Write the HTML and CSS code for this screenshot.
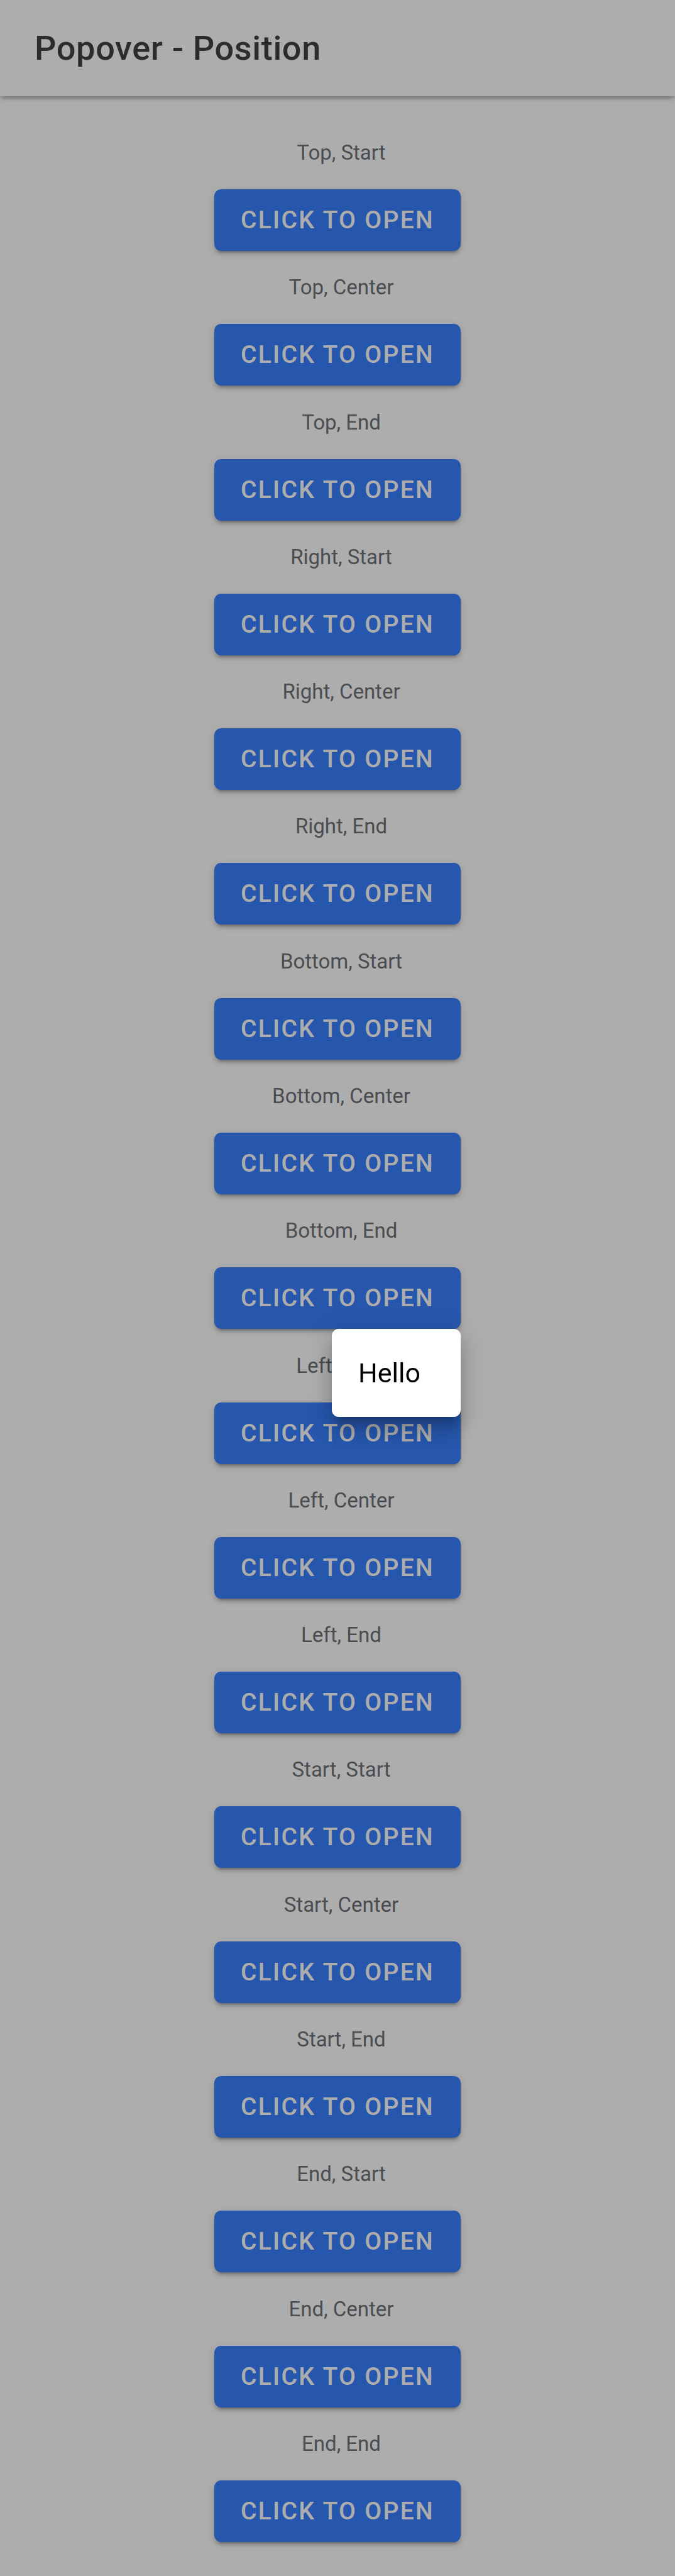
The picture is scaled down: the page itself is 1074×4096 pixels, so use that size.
FILE: index.html
```
<!DOCTYPE html>
<html lang="en">
<head>
<meta charset="utf-8">
<meta name="viewport" content="width=device-width, initial-scale=1">
<title>Popover - Position</title>
<link rel="stylesheet" href="styles.css">
</head>
<body>
<header class="toolbar"><h1 class="toolbar-title">Popover - Position</h1></header>
<main class="content">
  <section class="item"><h2 class="label">Top, Start</h2><button class="trigger" type="button">Click to open</button></section>
  <section class="item"><h2 class="label">Top, Center</h2><button class="trigger" type="button">Click to open</button></section>
  <section class="item"><h2 class="label">Top, End</h2><button class="trigger" type="button">Click to open</button></section>
  <section class="item"><h2 class="label">Right, Start</h2><button class="trigger" type="button">Click to open</button></section>
  <section class="item"><h2 class="label">Right, Center</h2><button class="trigger" type="button">Click to open</button></section>
  <section class="item"><h2 class="label">Right, End</h2><button class="trigger" type="button">Click to open</button></section>
  <section class="item"><h2 class="label">Bottom, Start</h2><button class="trigger" type="button">Click to open</button></section>
  <section class="item"><h2 class="label">Bottom, Center</h2><button class="trigger" type="button">Click to open</button></section>
  <section class="item item-open">
    <h2 class="label">Bottom, End</h2><button class="trigger" type="button">Click to open</button>
    <div class="popover" role="dialog" aria-label="Message">Hello</div>
  </section>
  <section class="item"><h2 class="label">Left, Start</h2><button class="trigger" type="button">Click to open</button></section>
  <section class="item"><h2 class="label">Left, Center</h2><button class="trigger" type="button">Click to open</button></section>
  <section class="item"><h2 class="label">Left, End</h2><button class="trigger" type="button">Click to open</button></section>
  <section class="item"><h2 class="label">Start, Start</h2><button class="trigger" type="button">Click to open</button></section>
  <section class="item"><h2 class="label">Start, Center</h2><button class="trigger" type="button">Click to open</button></section>
  <section class="item"><h2 class="label">Start, End</h2><button class="trigger" type="button">Click to open</button></section>
  <section class="item"><h2 class="label">End, Start</h2><button class="trigger" type="button">Click to open</button></section>
  <section class="item"><h2 class="label">End, Center</h2><button class="trigger" type="button">Click to open</button></section>
  <section class="item"><h2 class="label">End, End</h2><button class="trigger" type="button">Click to open</button></section>
</main>
<div class="backdrop"></div>
</body>
</html>
```
FILE: styles.css
```
* {
  box-sizing: border-box;
}

body {
  display: flex;
  flex-direction: column;
  min-height: 100vh;
  margin: 0;
  background: #fff;
  font-family: Roboto, "Liberation Sans", sans-serif;
}

.toolbar {
  display: flex;
  align-items: center;
  height: 153px;
  padding: 0 55px;
  background: #fff;
  box-shadow: 0 5px 8px -2px rgba(0, 0, 0, 0.2), 0 2px 8px rgba(0, 0, 0, 0.14), 0 1px 6px rgba(0, 0, 0, 0.12);
}

.toolbar-title {
  margin: 0;
  color: #424242;
  font-size: 54px;
  font-weight: 500;
  letter-spacing: 0.0125em;
}

.content {
  display: flex;
  flex: 1;
  flex-direction: column;
  align-items: center;
  justify-content: space-between;
  gap: 39px;
  padding: 71px 24px 54px;
}

.item {
  display: flex;
  flex-direction: column;
  align-items: center;
  gap: 39px;
}

.item-open {
  position: relative;
}

.label {
  margin: 0;
  padding-left: 12px;
  color: #6f7378;
  font-size: 33px;
  font-weight: 400;
  line-height: 38px;
}

.trigger {
  height: 98px;
  padding: 0 42px;
  border: 0;
  border-radius: 11px;
  background: #3880ff;
  box-shadow: 0 8px 3px -6px rgba(0, 0, 0, 0.2), 0 5px 5px rgba(0, 0, 0, 0.14), 0 3px 14px rgba(0, 0, 0, 0.12);
  color: #fff;
  font-family: inherit;
  font-size: 39px;
  font-weight: 500;
  letter-spacing: 0.06em;
  text-transform: uppercase;
}

.backdrop {
  position: fixed;
  inset: 0;
  z-index: 1;
  background: rgba(0, 0, 0, 0.32);
}

.popover {
  position: absolute;
  top: 100%;
  right: 0;
  z-index: 2;
  width: 205px;
  padding: 44px 42px;
  border-radius: 11px;
  background: #fff;
  box-shadow: 0 14px 14px -8px rgba(0, 0, 0, 0.2), 0 22px 28px 3px rgba(0, 0, 0, 0.14), 0 8px 38px 5px rgba(0, 0, 0, 0.12);
  color: #000;
  font-size: 43px;
  line-height: 52px;
}
```
